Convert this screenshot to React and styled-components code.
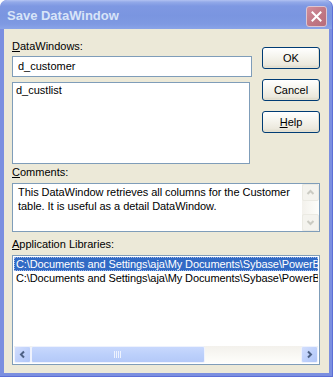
import React from "react";
import styled, { createGlobalStyle } from "styled-components";

const Global = createGlobalStyle`
  html, body {
    margin: 0;
    padding: 0;
    background: #ffffff;
  }
  body {
    font-family: Tahoma, "Liberation Sans", Arial, sans-serif;
    font-size: 11px;
    color: #000;
  }
`

const Window = styled.div`
  width: 333px;
  height: 377px;
  box-sizing: border-box;
  display: flex;
  flex-direction: column;
  background: #7b8fe0;
  border-right: 1px solid #5c6fd6;
  border-bottom: 1px solid #5c6fd6;
  border-radius: 7px 7px 0 0;
  padding: 0 3px 3px 4px;
  overflow: hidden;
`

const TitleBar = styled.div`
  height: 29px;
  margin: 0 -3px 0 -4px;
  padding: 0 5px 0 7px;
  display: flex;
  align-items: center;
  justify-content: space-between;
  background: linear-gradient(to bottom, #b2c2f2 0, #93aae9 2px, #7e98e2 6px, #7a95e0 16px, #7e99e2 24px, #8aa4e8 29px);
  border-radius: 7px 7px 0 0;
`

const Title = styled.span`
  font-family: "Trebuchet MS", "Liberation Sans", Arial, sans-serif;
  font-weight: bold;
  font-size: 13px;
  color: #d8e4f8;
  padding-top: 1px;
`

const CloseButton = styled.div`
  width: 19px;
  height: 19px;
  margin-top: 3px;
  border: 1px solid #dbc6d2;
  border-radius: 3px;
  background: linear-gradient(135deg, #d18e9b 0, #c07784 55%, #b76c7b 100%);
  display: flex;
  align-items: center;
  justify-content: center;
`

const Client = styled.div`
  flex: 1;
  background: #ece9d8;
  padding: 11px 9px 8px 8px;
  display: flex;
  flex-direction: column;
`

const TopRow = styled.div`
  display: flex;
  gap: 10px;
`

const LeftCol = styled.div`
  width: 240px;
  display: flex;
  flex-direction: column;
`

const Label = styled.div`
  line-height: 13px;
  height: 13px;
  margin-top: ${p => p.$top || 0}px;
  margin-bottom: ${p => p.$bottom || 3}px;
  white-space: nowrap;
`

const Key = styled.span`
  text-decoration: underline;
  text-underline-offset: 1px;
`

const TextBox = styled.div`
  box-sizing: border-box;
  width: ${p => p.$width || "100%"};
  height: ${p => p.$height}px;
  border: 1px solid #7f9db9;
  background: #fff;
  margin-top: ${p => p.$top || 0}px;
  padding: ${p => p.$pad || "0"};
  line-height: 13px;
  white-space: nowrap;
  overflow: hidden;
`

const ButtonCol = styled.div`
  width: 58px;
  padding-top: 7px;
  display: flex;
  flex-direction: column;
  gap: 10px;
`

const Button = styled.div`
  box-sizing: border-box;
  height: 22px;
  border: 1px solid #003c74;
  border-radius: 3px;
  background: linear-gradient(to bottom, #ffffff 0, #f6f5ef 40%, #ebe8dc 85%, #d9d5c4 100%);
  box-shadow: inset -1px -1px 0 #e3e0d2;
  display: flex;
  align-items: center;
  justify-content: center;
  padding-bottom: 1px;
`

const CommentBox = styled.div`
  box-sizing: border-box;
  height: 49px;
  border: 1px solid #7f9db9;
  background: #fff;
  display: flex;
`

const CommentText = styled.div`
  flex: 1;
  padding: 1px 0 0 5px;
  line-height: 14px;
  letter-spacing: -0.05px;
`

const VScroll = styled.div`
  width: 17px;
  display: flex;
  flex-direction: column;
  justify-content: space-between;
  background: linear-gradient(to right, #f3f1ec, #fefefb);
`

const ScrollBtn = styled.div`
  box-sizing: border-box;
  width: 17px;
  height: 17px;
  border: 1px solid ${p => (p.$disabled ? "#ebeae3" : "#eef2fd")};
  border-radius: 2px;
  background: ${p => (p.$disabled ? "#f4f3ee" : "linear-gradient(135deg, #d2defd 0, #bccffb 60%, #b1c6f7 100%)")};
  display: flex;
  align-items: center;
  justify-content: center;
  flex-shrink: 0;
`

const ListBox = styled.div`
  box-sizing: border-box;
  height: 110px;
  border: 1px solid #7f9db9;
  background: #fff;
  display: flex;
  flex-direction: column;
  padding: 1px 1px 0 1px;
`

const Rows = styled.div`
  flex: 1;
  overflow: hidden;
`

const Row = styled.div`
  height: 14px;
  line-height: 14px;
  padding-left: 2px;
  white-space: nowrap;
  overflow: hidden;
  box-sizing: border-box;
  letter-spacing: -0.1px;
  color: ${p => (p.$selected ? "#fff" : "#000")};
  background: ${p => (p.$selected ? "#316ac5" : "transparent")};
  outline: ${p => (p.$selected ? "1px dotted #9fb8e6" : "none")};
  outline-offset: -1px;
`

const HScroll = styled.div`
  height: 17px;
  margin: 0 0 1px 0;
  display: flex;
  background: linear-gradient(to bottom, #f3f1ec, #fefefb);
`

const Thumb = styled.div`
  box-sizing: border-box;
  width: 174px;
  height: 17px;
  border: 1px solid #eef2fd;
  border-radius: 2px;
  background: linear-gradient(to bottom, #c8d8fd 0, #bcd0fb 50%, #b4c9f8 100%);
  display: flex;
  align-items: center;
  justify-content: center;
`

const Track = styled.div`
  flex: 1;
`

const Chevron = ({ dir, color }) => {
  const pts = {
    left: "6,1.5 3,4.5 6,7.5",
    right: "3,1.5 6,4.5 3,7.5",
    up: "1.5,6 4.5,3 7.5,6",
    down: "1.5,3 4.5,6 7.5,3",
  }[dir];
  return (
    <svg width="9" height="9" viewBox="0 0 9 9">
      <polyline points={pts} fill="none" stroke={color} strokeWidth="2" />
    </svg>
  );
};

const Grip = () => (
  <svg width="8" height="7" viewBox="0 0 8 7">
    {[0.5, 2.5, 4.5, 6.5].map(x => (
      <line key={x} x1={x} y1="0" x2={x} y2="7" stroke="#eef3fe" strokeWidth="1" />
    ))}
  </svg>
);

const path = "C:\\Documents and Settings\\aja\\My Documents\\Sybase\\PowerBuilder\\Examples\\pbexamfe.pbl";

export default function App() {
  return (
    <>
      <Global />
      <Window>
        <TitleBar>
          <Title>Save DataWindow</Title>
          <CloseButton>
            <svg width="11" height="11" viewBox="0 0 11 11">
              <path d="M1.5 1.5 L9.5 9.5 M9.5 1.5 L1.5 9.5" stroke="#fff" strokeWidth="2" strokeLinecap="square" />
            </svg>
          </CloseButton>
        </TitleBar>
        <Client>
          <TopRow>
            <LeftCol>
              <Label><Key>D</Key>ataWindows:</Label>
              <TextBox $height={21} $pad="3px 0 0 5px">d_customer</TextBox>
              <TextBox $height={82} $width="238px" $top={5} $pad="1px 0 0 3px">d_custlist</TextBox>
            </LeftCol>
            <ButtonCol>
              <Button>OK</Button>
              <Button>Cancel</Button>
              <Button><span><Key>H</Key>elp</span></Button>
            </ButtonCol>
          </TopRow>
          <Label $top={2} $bottom={4}><Key>C</Key>omments:</Label>
          <CommentBox>
            <CommentText>
              This DataWindow retrieves all columns for the Customer table. It is useful as a detail DataWindow.
            </CommentText>
            <VScroll>
              <ScrollBtn $disabled><Chevron dir="up" color="#cbcbc3" /></ScrollBtn>
              <ScrollBtn $disabled><Chevron dir="down" color="#cbcbc3" /></ScrollBtn>
            </VScroll>
          </CommentBox>
          <Label $top={6} $bottom={4}><Key>A</Key>pplication Libraries:</Label>
          <ListBox>
            <Rows>
              <Row $selected>{path}</Row>
              <Row>{path.replace("pbexamfe", "pbexamw1")}</Row>
            </Rows>
            <HScroll>
              <ScrollBtn><Chevron dir="left" color="#4d6185" /></ScrollBtn>
              <Thumb><Grip /></Thumb>
              <Track />
              <ScrollBtn><Chevron dir="right" color="#4d6185" /></ScrollBtn>
            </HScroll>
          </ListBox>
        </Client>
      </Window>
    </>
  );
}
